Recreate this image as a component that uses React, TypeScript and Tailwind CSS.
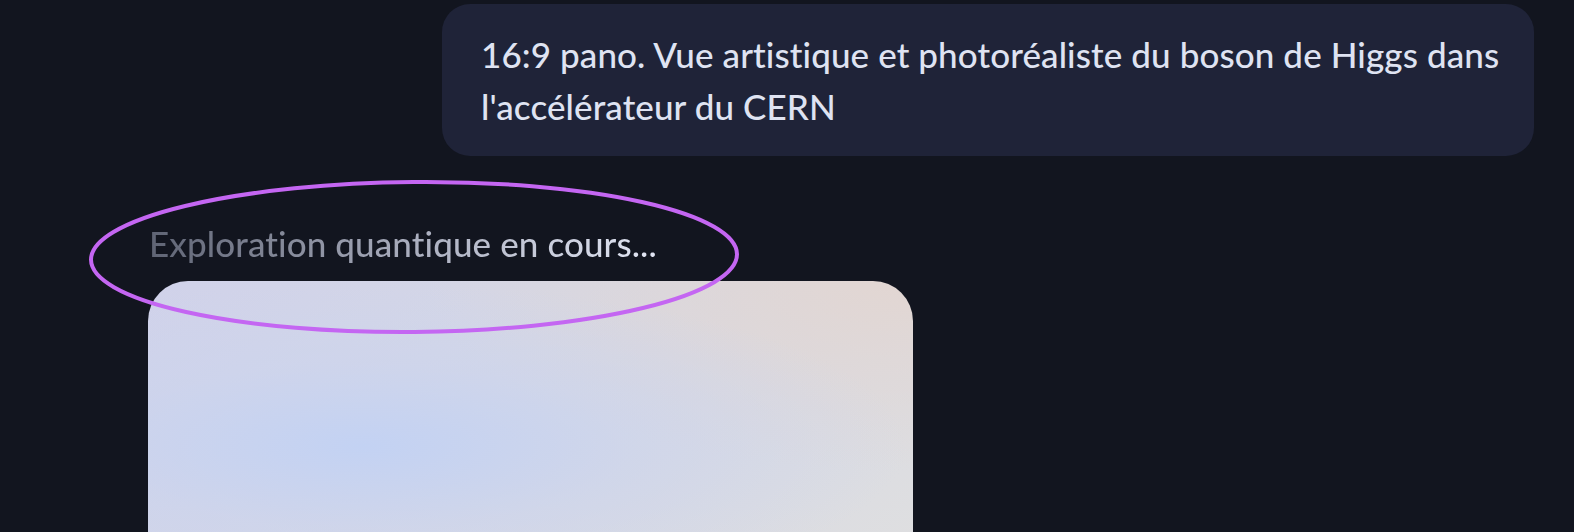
export default function App() {
  return (
    <div className="relative min-h-[532px] h-[532px] overflow-hidden bg-[#12151f] font-['Lato',sans-serif]">
      <div className="flex flex-col pt-[4px] pr-[40px]">
        <div className="flex justify-end">
          <div className="w-[1092px] rounded-[28px] bg-[#1f2338] pl-[39px] pr-[16px] py-[24px] text-[35px] font-medium leading-[52px] tracking-[0.1px] text-[#dfe3f2]">
            16:9 pano. Vue artistique et photoréaliste du boson de Higgs dans l'accélérateur du CERN
          </div>
        </div>
        <div className="pl-[149px] mt-[63px]">
          <span className="bg-gradient-to-r from-[#5f6474] via-[#a8acbc] to-[#e2e6f4] bg-clip-text text-[35px] font-medium leading-[48px] tracking-[0.1px] text-transparent">
            Exploration quantique en cours...
          </span>
        </div>
        <div className="pl-[148px] mt-[14px]">
          <div className="h-[300px] w-[765px] rounded-t-[40px] bg-[radial-gradient(ellipse_at_28%_55%,#c3d2f3_0%,rgba(203,212,238,0.6)_35%,rgba(218,220,230,0)_70%),radial-gradient(ellipse_at_100%_0%,#e2d6d2_0%,rgba(224,220,222,0)_45%),linear-gradient(135deg,#d0d2ea_0%,#d6d8e4_50%,#dfdfe0_100%)]" />
        </div>
      </div>
      <svg className="pointer-events-none absolute left-0 top-0" width="1574" height="532">
        <ellipse cx="414" cy="257" rx="323" ry="75" fill="none" stroke="#c466f2" strokeWidth="4" transform="rotate(-0.5 414 257)" />
      </svg>
    </div>
  );
}
